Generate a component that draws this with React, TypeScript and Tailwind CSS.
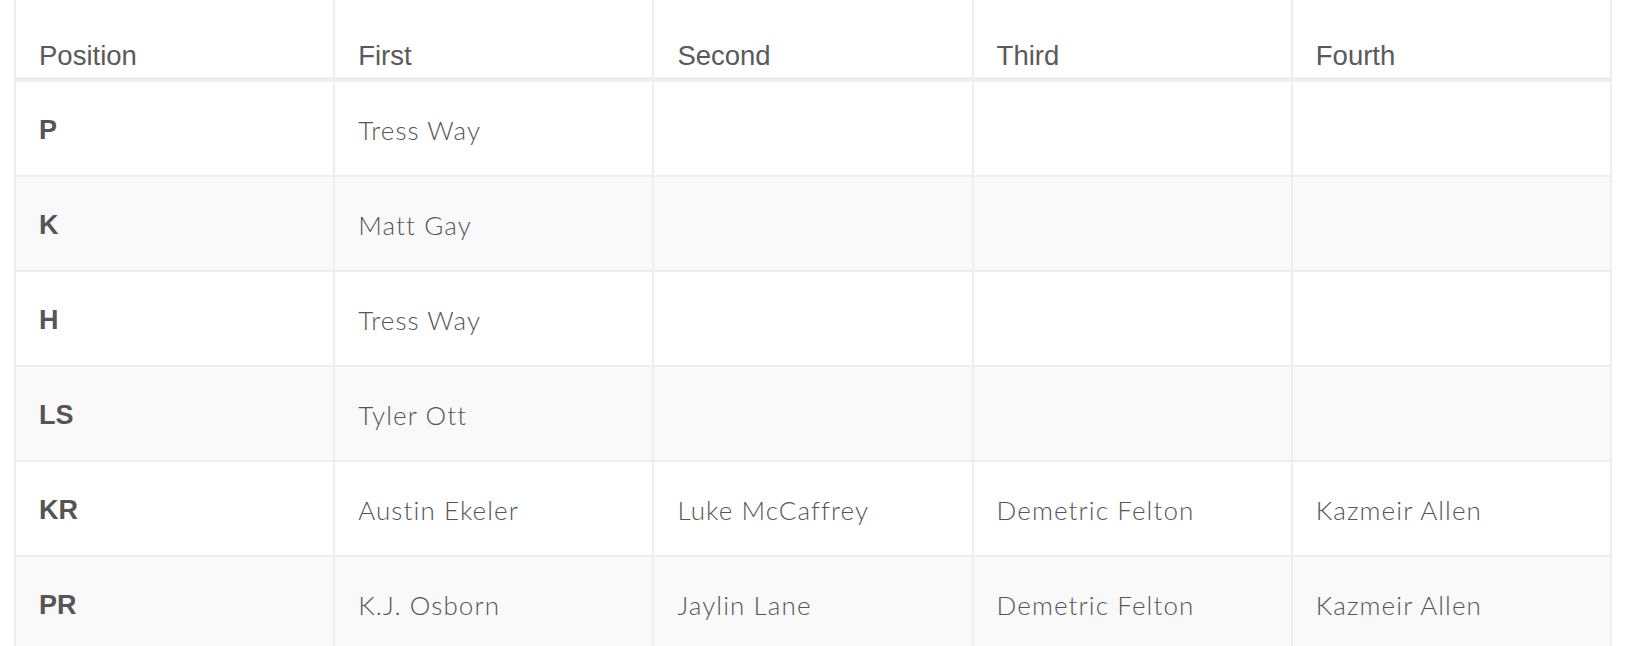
const headers = ["Position", "First", "Second", "Third", "Fourth"];

const rows: string[][] = [
  ["P", "Tress Way", "", "", ""],
  ["K", "Matt Gay", "", "", ""],
  ["H", "Tress Way", "", "", ""],
  ["LS", "Tyler Ott", "", "", ""],
  ["KR", "Austin Ekeler", "Luke McCaffrey", "Demetric Felton", "Kazmeir Allen"],
  ["PR", "K.J. Osborn", "Jaylin Lane", "Demetric Felton", "Kazmeir Allen"],
];

export default function App() {
  return (
    <div className="h-[646px] w-[1634px] overflow-hidden bg-white pl-[14px]">
      <div className="w-[1598px] border-r-2 border-[#eeeeee]">
        <div className="grid grid-cols-5 border-b-[5px] border-[#eeeeee]">
          {headers.map((h) => (
            <div
              key={h}
              className="flex h-[77px] items-end border-l-2 border-[#eeeeee] px-[23px] pb-[8px] font-['Liberation_Sans',Arial,sans-serif] text-[27.5px] leading-none text-[#5a5a5a]"
            >
              {h}
            </div>
          ))}
        </div>
        {rows.map((row, i) => (
          <div
            key={row[0]}
            className={`grid grid-cols-5 border-b-2 border-[#eeeeee] ${i % 2 === 1 ? "bg-[#f9f9f9]" : "bg-white"}`}
          >
            {row.map((cell, j) => (
              <div
                key={j}
                className={
                  j === 0
                    ? "flex h-[93px] items-center border-l-2 border-[#eeeeee] px-[23px] pt-[3px] font-['Liberation_Sans',Arial,sans-serif] text-[27px] font-bold leading-none text-[#555555]"
                    : "flex h-[93px] items-center border-l-2 border-[#eeeeee] px-[23px] pt-[3px] font-['Lato',sans-serif] text-[26px] font-light leading-none tracking-[1.1px] text-[#555555]"
                }
              >
                {cell}
              </div>
            ))}
          </div>
        ))}
      </div>
    </div>
  );
}
